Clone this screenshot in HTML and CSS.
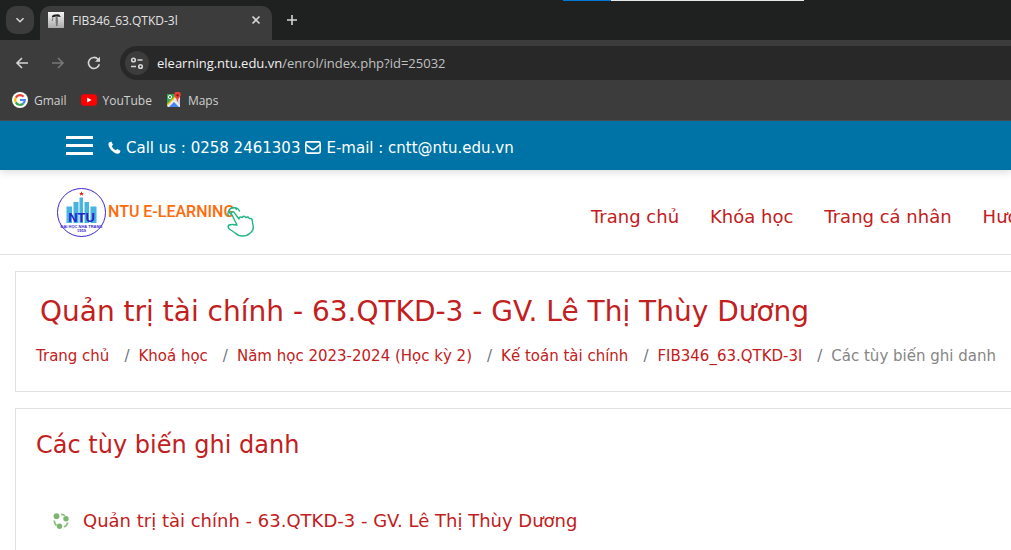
FILE: index.html
```html
<!DOCTYPE html>
<html lang="vi">
<head>
<meta charset="utf-8">
<title>FIB346_63.QTKD-3l</title>
<link rel="stylesheet" href="styles.css">
</head>
<body>
<div class="browser">
  <div class="edge"><span class="edge-blue"></span><span class="edge-light"></span></div>
  <div class="tabs">
    <button class="tab-search" aria-label="Search tabs"><svg width="12" height="12" viewBox="0 0 12 12"><path d="M2.5 4.2 6 7.7l3.500-3.500" class="line"/></svg></button>
    <div class="tab">
      <svg class="favicon" width="16" height="16" viewBox="0 0 16 16"><defs><linearGradient id="fav" x2="0" y2="1"><stop stop-color="#f5f5f5"/><stop offset="1" stop-color="#aaa"/></linearGradient></defs><rect width="16" height="16" fill="url(#fav)"/><path d="M4 4Q5 2 8 2.500q4-1 4 1.500l1 1-5-.5-4 1z" fill="#222"/><path d="M7.500 5l1.500 0 1 4-1 5-1 0-.5-5z" fill="#888"/><path d="M5 6l-1 3M9 5v9" stroke="#555" stroke-width=".8"/></svg>
      <span class="tab-title">FIB346_63.QTKD-3l</span>
      <button class="tab-close" aria-label="Close tab"><svg width="10" height="10" viewBox="0 0 10 10"><path d="M1.500 1.500l7 7m0-7l-7 7" class="line"/></svg></button>
    </div>
    <button class="new-tab" aria-label="New tab"><svg width="12" height="12" viewBox="0 0 12 12"><path d="M6 1v10M1 6h10" class="line"/></svg></button>
  </div>
  <div class="toolbar">
    <button class="tool" aria-label="Back"><svg width="14" height="14" viewBox="0 0 14 14"><path d="M13 7H2m5-5L2 7l5 5" class="line"/></svg></button>
    <button class="tool dim" aria-label="Forward"><svg width="14" height="14" viewBox="0 0 14 14"><path d="M1 7h11M7 2l5 5-5 5" class="line"/></svg></button>
    <button class="tool" aria-label="Reload"><svg width="14" height="14" viewBox="0 0 14 14"><path d="M12.300 8.200A5.500 5.500 0 1 1 11 3.200L12.500 5" class="line"/><path d="M13 .8v5H8z" fill="currentColor"/></svg></button>
    <div class="address">
      <button class="site" aria-label="Site information"><svg width="14" height="14" viewBox="0 0 14 14"><g class="line"><circle cx="3.500" cy="4" r="1.800"/><path d="M7.500 4h5M1 10.500h5"/><circle cx="10.500" cy="10.500" r="1.800"/></g></svg></button>
      <span class="url"><b>elearning.ntu.edu.vn</b>/enrol/index.php?id=25032</span>
    </div>
  </div>
  <nav class="bookmarks">
    <a href="#"><svg width="16" height="16" viewBox="0 0 16 16"><circle cx="8" cy="8" r="8" fill="#fff"/><g fill="none" stroke-width="2.200"><path d="M3.800 5.600A4.800 4.800 0 0 1 11.500 4.700" stroke="#ea4335"/><path d="M3.800 5.600a4.800 4.800 0 0 0 0 4.800" stroke="#fbbc05"/><path d="M3.800 10.400a4.800 4.800 0 0 0 7.400 1.200" stroke="#34a853"/><path d="M11.200 11.600A4.800 4.800 0 0 0 12.800 8H8" stroke="#4285f4"/></g></svg>Gmail</a>
    <a href="#"><svg width="16" height="16" viewBox="0 0 16 16"><rect y="2.200" width="16" height="11.600" rx="3" fill="#f00"/><path d="M6.200 5.500v5L10.600 8z" fill="#fff"/></svg>YouTube</a>
    <a href="#"><svg width="16" height="16" viewBox="0 0 16 16"><path d="M1 2h13v13H1z" fill="#34a853"/><path d="M1 13 12 2h2v13H2z" fill="#e8eaed"/><path d="M3 15l5-5 5 5z" fill="#4285f4"/><path d="M1 12 11 2h2L1 14z" fill="#fbbc05"/><path d="M9 8l5 5V8z" fill="#cfd2d6"/><circle cx="4" cy="5" r="1.700" fill="none" stroke="#fff"/><path d="M11.500 10Q11 7 9 5a3.300 3.300 0 1 1 5.500-1Q12.500 6 11.500 10" fill="#ea4335"/><circle cx="11.600" cy="3.200" r="1.200" fill="#8c1c14"/></svg>Maps</a>
  </nav>
</div>
<div class="contact">
  <button class="menu" aria-label="Menu"><span></span><span></span><span></span></button>
  <p class="contact-text">
    <svg width="13" height="13" viewBox="0 0 13 13"><path d="M1 1.500 3.200.6 5 3.700 3.700 5.200Q5 8 7.900 9.300L9.300 8l3.200 1.700-.8 2.300Q9.500 13.500 6.500 11.800 2.500 9.500.9 5.500 0 3 1 1.500" fill="currentColor"/></svg>
    Call us : 0258 2461303
    <svg width="16" height="13" viewBox="0 0 16 13"><rect x=".8" y=".9" width="14.400" height="11.200" rx="1.500" class="line"/><path d="M1 3.500l5.500 4.500q1.500 1 3 0L15 3.500" class="line"/></svg>
    E-mail : cntt@ntu.edu.vn
  </p>
</div>
<header class="header">
  <a class="logo" href="#" aria-label="NTU E-Learning">
    <svg width="200" height="52" viewBox="0 0 200 52"><circle cx="25.500" cy="25.500" r="24" fill="#fff" stroke="#3b28d0"/><path d="M10.500 19.500h5.500V36h-5.500zM17.500 15h5v21h-5zM23.500 10.500h3.500V36h-3.500zM28.500 15h4.500v21h-4.500zM34.500 19.500h6V36h-6z" fill="#48b4e0"/><path d="M25.500 4.500l.7 1.600h1.700l-1.300 1 .5 1.700-1.600-1-1.600 1 .5-1.700-1.300-1h1.700z" fill="#e02010"/><text x="25.500" y="35" text-anchor="middle" class="logo-ntu">NTU</text><text x="25.500" y="40.500" text-anchor="middle" class="logo-small">ĐẠI HỌC NHA TRANG</text><text x="25.500" y="45" text-anchor="middle" class="logo-small">1959</text><text x="52" y="30" class="logo-word">NTU E-LEARNING</text><g fill="none" stroke="#20b683" stroke-width="1.400" stroke-linejoin="round" stroke-linecap="round"><path d="M172.500 29a6 6 0 1 1 11-5M174.500 27a3.800 3.800 0 1 1 6-4.500"/><path fill="#fff" d="M181 38l-5.500-11q-.5-2.500 2-2.300l5.500 7.300q0-3 3.300-1.500 1-2.500 3.500 0 2-1.500 3.500 1 3-.5 3 2.500l1 6q0 4-3 6-3 3-8 3-4 0-7-3l-6-4q-2-2-.5-4 3-1 8.200 0z"/></g></svg>
  </a>
  <nav class="nav"><a href="#">Trang chủ</a><a href="#">Khóa học</a><a href="#">Trang cá nhân</a><a href="#">Hướng dẫn</a></nav>
</header>
<main class="main">
  <section class="card">
    <h1>Quản trị tài chính - 63.QTKD-3 - GV. Lê Thị Thùy Dương</h1>
    <ol class="crumbs"><li><a href="#">Trang chủ</a></li><li><a href="#">Khoá học</a></li><li><a href="#">Năm học 2023-2024 (Học kỳ 2)</a></li><li><a href="#">Kế toán tài chính</a></li><li><a href="#">FIB346_63.QTKD-3l</a></li><li>Các tùy biến ghi danh</li></ol>
  </section>
  <section class="card">
    <h2>Các tùy biến ghi danh</h2>
    <h3><svg width="16" height="16" viewBox="0 0 16 16"><g fill="none" stroke="#8cbd82" stroke-width="1.800"><path d="M1.200 7.500q.3 3.200 2.300 5M8 1.300q2.500 0 4 1.300M14.800 9.500q-.8 3-3.800 4.500"/></g><g fill="#7fb573"><circle cx="3.500" cy="3.200" r="2.900"/><circle cx="13" cy="5.800" r="2.700"/><circle cx="6.500" cy="13.200" r="2.700"/></g></svg><a href="#">Quản trị tài chính - 63.QTKD-3 - GV. Lê Thị Thùy Dương</a></h3>
  </section>
</main>
</body>
</html>
```
FILE: styles.css
```css
* { box-sizing: border-box; }
body { margin: 0; background: #fff; color: #868686; font-family: Verdana, "DejaVu Sans", sans-serif; font-size: 15px; overflow: hidden; }
a { color: #c22020; text-decoration: none; }
button { border: 0; padding: 0; background: none; color: inherit; display: flex; align-items: center; justify-content: center; flex: none; }
svg { flex: none; }
h1, h2, h3, p, ol { margin: 0; padding: 0; font-weight: 400; }
.line { fill: none; stroke: currentColor; stroke-width: 1.6; }

.browser { position: relative; background: #3c3c3c; color: #d5d5d5; font-family: "Segoe UI", "Open Sans", sans-serif; font-size: 12px; border-bottom: 1px solid #4a4a4a; }
.edge { position: absolute; top: 0; left: 563px; right: 207px; height: 1px; display: flex; }
.edge-blue { flex: 1; background: #0078d7; }
.edge-light { flex: 4; background: #e6e6e6; }
.tabs { display: flex; height: 40px; padding: 6px 6px 0; background: #1f2120; }
.tab-search { width: 28px; height: 28px; border-radius: 10px; background: #3c3c3c; }
.tab { display: flex; align-items: center; width: 232px; margin-left: 6px; padding: 0 10px 6px 8px; border-radius: 10px 10px 0 0; background: #3c3c3c; }
.tab-title { flex: 1; margin-left: 8px; white-space: nowrap; color: #e3e3e3; }
.tab-close { width: 12px; height: 16px; }
.new-tab { width: 28px; height: 28px; margin-left: 6px; }
.toolbar { display: flex; align-items: center; height: 46px; padding-left: 8px; }
.tool { width: 28px; height: 28px; margin-right: 8px; }
.dim { color: #777; }
.address { display: flex; align-items: center; flex: 1; height: 34px; margin-left: 4px; padding-left: 5px; border-radius: 17px 0 0 17px; background: #282828; }
.site { width: 24px; height: 24px; border-radius: 12px; background: #3c3c3c; }
.url { margin-left: 8px; font-size: 13px; color: #c0c0c0; }
.url b { font-weight: 400; color: #f0f0f0; }
.bookmarks { display: flex; gap: 14px; height: 34px; padding: 0 12px 6px; align-items: center; }
.bookmarks a { display: flex; align-items: center; gap: 6px; color: #d0d0d0; }

.contact { display: flex; align-items: center; height: 49px; padding-left: 66px; background: #0073a6; color: #fff; box-shadow: 0 2px 8px rgba(0, 0, 0, .15); }
.menu { flex-direction: column; gap: 5px; width: 27px; }
.menu span { width: 100%; height: 3px; background: #fff; }
.contact-text { display: flex; align-items: center; gap: 5px; margin-left: 15px; padding-top: 4px; white-space: nowrap; }

.header { display: flex; align-items: center; justify-content: space-between; height: 85px; padding-left: 56px; border-bottom: 1px solid #e2e2e2; overflow: hidden; }
.logo { display: flex; padding-top: 2px; }
.logo-ntu { font: bold 13px "Liberation Sans", Arial, sans-serif; fill: #2424cc; }
.logo-small { font: bold 4px "Liberation Sans", Arial, sans-serif; fill: #3b28d0; }
.logo-word { font: 500 16px Roboto, "Liberation Sans", sans-serif; fill: #ff6a0a; }
.nav { display: flex; gap: 31px; flex: none; width: 420px; padding-top: 9px; font-size: 18px; white-space: nowrap; }

.main { display: grid; gap: 16px; padding: 16px 0 0 15px; white-space: nowrap; }
.card { padding: 20px; border: 1px solid #dee0e2; border-right: 0; overflow: hidden; }
h1 { padding-left: 4px; color: #c22020; font-size: 28px; line-height: 40px; }
.crumbs { display: flex; list-style: none; padding: 12px 0 3px; line-height: 24px; font-size: 15px; }
.crumbs li { display: flex; }
.crumbs li + li::before { content: "/"; padding: 0 9px 0 15px; color: #6c757d; }
h2 { color: #c22020; font-size: 24px; line-height: 32px; }
h3 { display: flex; align-items: center; gap: 14px; margin: 44px 0 0 17px; font-size: 18px; line-height: 32px; }
```
